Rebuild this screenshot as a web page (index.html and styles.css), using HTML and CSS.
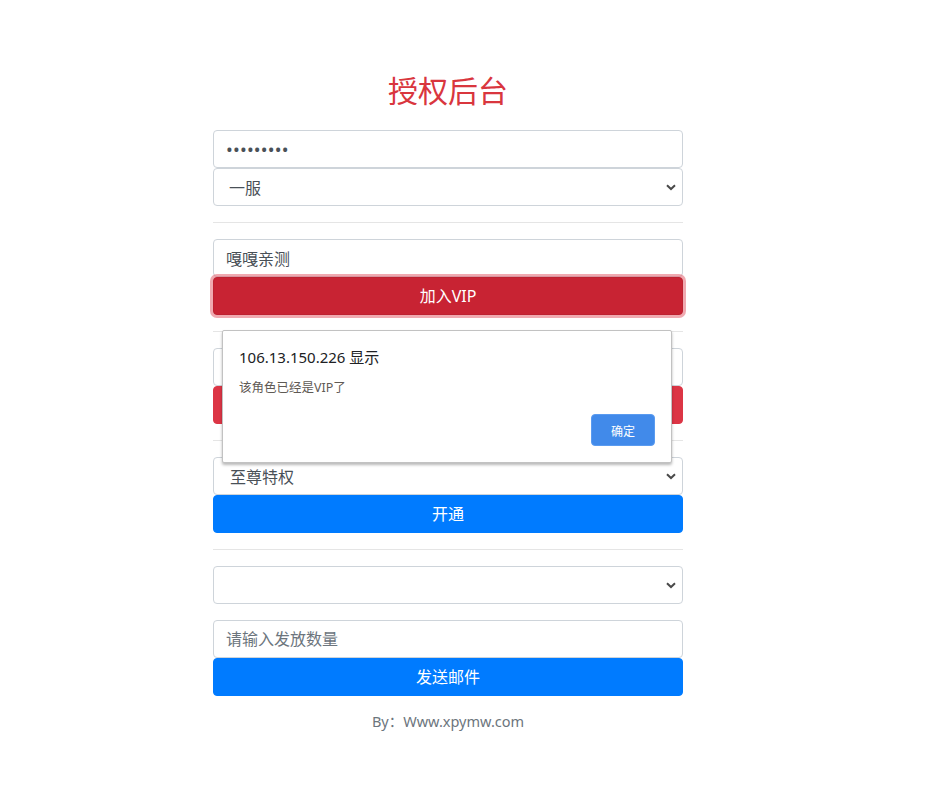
FILE: index.html
```html
<!DOCTYPE html>
<html lang="zh-CN">
<head>
<meta charset="utf-8">
<title>授权后台</title>
<link rel="stylesheet" href="styles.css">
</head>
<body>
<div class="page">
  <div class="wrap">
    <h2 class="title">授权后台</h2>
    <input class="field pass" type="password" value="123456789">
    <select class="field sel"><option>一服</option></select>
    <hr class="rule">
    <input class="field" type="text" value="嘎嘎亲测">
    <button class="btn btn-danger-focus">加入VIP</button>
    <hr class="rule">
    <input class="field" type="text" value="">
    <button class="btn btn-danger">&nbsp;</button>
    <hr class="rule">
    <select class="field sel sel-wide"><option>至尊特权</option></select>
    <button class="btn btn-primary">开通</button>
    <hr class="rule">
    <select class="field sel gap-bottom"><option></option></select>
    <input class="field" type="text" placeholder="请输入发放数量">
    <button class="btn btn-primary">发送邮件</button>
    <p class="footer">By：Www.xpymw.com</p>
  </div>

  <div class="alert-dialog">
    <div class="alert-title">106.13.150.226 显示</div>
    <div class="alert-msg">该角色已经是VIP了</div>
    <div class="alert-actions">
      <button class="alert-ok">确定</button>
    </div>
  </div>
</div>
</body>
</html>
```
FILE: styles.css
```css
* { box-sizing: border-box; }
html, body { margin: 0; padding: 0; background: #fff; }
body {
  font-family: "Noto Sans", "Noto Sans CJK SC", sans-serif;
  font-size: 16px;
  line-height: 1.5;
  color: #212529;
}
.page {
  position: relative;
  width: 896px;
  min-height: 802px;
}
.wrap {
  width: 470px;
  margin: 0 auto;
  padding-top: 70px;
  display: flex;
  flex-direction: column;
}
.title {
  margin: 0 0 22px;
  text-align: center;
  font-family: "Noto Sans CJK SC", sans-serif;
  font-weight: 400;
  font-size: 30px;
  line-height: 38px;
  color: #d9363e;
}
.field {
  display: block;
  width: 100%;
  height: 38px;
  padding: 6px 12px;
  font-family: "Noto Sans", "Noto Sans CJK SC", sans-serif;
  font-size: 16px;
  line-height: 24px;
  color: #495057;
  background: #fff;
  border: 1px solid #ced4da;
  border-radius: 4px;
  outline: none;
  margin: 0;
}
.field::placeholder { color: #6c757d; }
.pass { font-size: 18px; letter-spacing: 0.2px; }
.sel {
  -webkit-appearance: none;
  appearance: none;
  padding-left: 15px;
  padding-top: 7px;
  padding-bottom: 5px;
  background-image: url("data:image/svg+xml;utf8,<svg xmlns='http://www.w3.org/2000/svg' width='10' height='7' viewBox='0 0 10 7'><path d='M1 1.2 L5 5 L9 1.2' fill='none' stroke='%234a4a4a' stroke-width='2'/></svg>");
  background-repeat: no-repeat;
  background-position: right 6px center;
  background-size: 10px 7px;
}
.sel-wide { padding-left: 16px; }
.gap-bottom { margin-bottom: 16px; }
.rule {
  width: 100%;
  margin: 16px 0;
  border: 0;
  border-top: 1px solid rgba(0, 0, 0, 0.1);
  height: 0;
}
.btn {
  display: block;
  width: 100%;
  height: 38px;
  padding: 6px 12px;
  font-family: "Noto Sans", "Noto Sans CJK SC", sans-serif;
  font-size: 16px;
  line-height: 24px;
  color: #fff;
  border: 1px solid transparent;
  border-radius: 4px;
  text-align: center;
  position: relative;
}
.btn-danger { background: #dc3545; border-color: #dc3545; }
.btn-danger-focus {
  background: #c82333;
  border-color: #bd2130;
  box-shadow: 0 0 0 3px rgba(225, 83, 97, 0.5);
  z-index: 1;
}
.btn-primary { background: #007bff; border-color: #007bff; }
.footer {
  margin: 15px 0 0;
  text-align: center;
  color: #6c757d;
  font-size: 14.5px;
}

/* browser alert */
.alert-dialog {
  position: absolute;
  left: 222px;
  top: 330px;
  width: 450px;
  height: 133px;
  background: #fff;
  border: 1px solid #c2c2c2;
  border-radius: 2px;
  box-shadow: 0 2px 3px rgba(0, 0, 0, 0.28);
  padding: 16px 16px 16px 16px;
  display: flex;
  flex-direction: column;
  font-family: "Noto Sans", "Noto Sans CJK SC", sans-serif;
  z-index: 5;
}
.alert-title {
  font-size: 15px;
  line-height: 20px;
  color: #202124;
}
.alert-msg {
  margin-top: 12px;
  font-size: 12.5px;
  line-height: 18px;
  color: #5f5a55;
}
.alert-actions {
  margin-top: auto;
  display: flex;
  justify-content: flex-end;
}
.alert-ok {
  width: 64px;
  height: 32px;
  border: 1px solid #5a9bf0;
  border-radius: 4px;
  background: #418aea;
  color: #fff;
  font-family: "Noto Sans CJK SC", sans-serif;
  font-size: 12px;
  padding: 0;
}
```
